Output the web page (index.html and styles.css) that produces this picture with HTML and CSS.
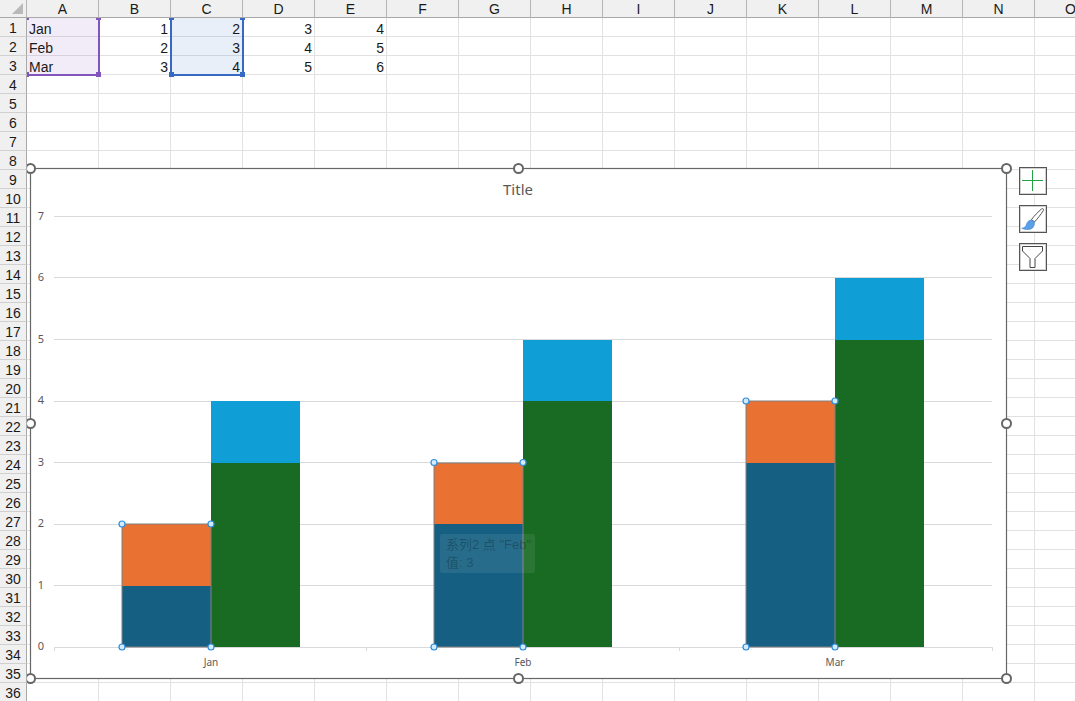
FILE: index.html
```html
<!DOCTYPE html>
<html lang="en">

<head>
    <meta charset="UTF-8">
    <title>Sheet1</title>
    <link rel="stylesheet" href="styles.css">
</head>

<body>

    <div class="sheet">
        <div class="col-heads">
            <div class="corner"><span class="corner-mark"></span></div>
            <div class="col-head">A</div>
            <div class="col-head">B</div>
            <div class="col-head">C</div>
            <div class="col-head">D</div>
            <div class="col-head">E</div>
            <div class="col-head">F</div>
            <div class="col-head">G</div>
            <div class="col-head">H</div>
            <div class="col-head">I</div>
            <div class="col-head">J</div>
            <div class="col-head">K</div>
            <div class="col-head">L</div>
            <div class="col-head">M</div>
            <div class="col-head">N</div>
            <div class="col-head">O</div>
        </div>

        <div class="sheet-body">
            <div class="row-heads">
                <div class="row-head">1</div>
                <div class="row-head">2</div>
                <div class="row-head">3</div>
                <div class="row-head">4</div>
                <div class="row-head">5</div>
                <div class="row-head">6</div>
                <div class="row-head">7</div>
                <div class="row-head">8</div>
                <div class="row-head">9</div>
                <div class="row-head">10</div>
                <div class="row-head">11</div>
                <div class="row-head">12</div>
                <div class="row-head">13</div>
                <div class="row-head">14</div>
                <div class="row-head">15</div>
                <div class="row-head">16</div>
                <div class="row-head">17</div>
                <div class="row-head">18</div>
                <div class="row-head">19</div>
                <div class="row-head">20</div>
                <div class="row-head">21</div>
                <div class="row-head">22</div>
                <div class="row-head">23</div>
                <div class="row-head">24</div>
                <div class="row-head">25</div>
                <div class="row-head">26</div>
                <div class="row-head">27</div>
                <div class="row-head">28</div>
                <div class="row-head">29</div>
                <div class="row-head">30</div>
                <div class="row-head">31</div>
                <div class="row-head">32</div>
                <div class="row-head">33</div>
                <div class="row-head">34</div>
                <div class="row-head">35</div>
                <div class="row-head">36</div>
            </div>

            <div class="cells">
                <div class="cell text sel-purple">Jan</div>
                <div class="cell">1</div>
                <div class="cell sel-blue">2</div>
                <div class="cell">3</div>
                <div class="cell">4</div>

                <div class="cell text sel-purple">Feb</div>
                <div class="cell">2</div>
                <div class="cell sel-blue">3</div>
                <div class="cell">4</div>
                <div class="cell">5</div>

                <div class="cell text sel-purple">Mar</div>
                <div class="cell">3</div>
                <div class="cell sel-blue">4</div>
                <div class="cell">5</div>
                <div class="cell">6</div>

                <div class="range range-a">
                    <span class="grip tl"></span><span class="grip tr"></span>
                    <span class="grip bl"></span><span class="grip br"></span>
                </div>
                <div class="range range-c">
                    <span class="grip tl"></span><span class="grip tr"></span>
                    <span class="grip bl"></span><span class="grip br"></span>
                </div>
            </div>
        </div>
    </div>

    <svg class="chart" width="1075" height="701" viewBox="0 0 1075 701">
        <rect class="chart-area" x="30.500" y="168.500" width="976" height="510" />

        <text class="chart-title" x="518" y="194.500">Title</text>

        <g class="grid-lines">
            <path d="M54 216.500H992" />
            <path d="M54 277.500H992" />
            <path d="M54 339.500H992" />
            <path d="M54 401.500H992" />
            <path d="M54 462.500H992" />
            <path d="M54 524.500H992" />
            <path d="M54 585.500H992" />
            <path d="M54.500 651V647.500H992.500V651" />
            <path d="M366.500 647V651M679.500 647V651" />
        </g>

        <g class="y-labels">
            <text x="41" y="220">7</text>
            <text x="41" y="281">6</text>
            <text x="41" y="343">5</text>
            <text x="41" y="404">4</text>
            <text x="41" y="466">3</text>
            <text x="41" y="527">2</text>
            <text x="41" y="589">1</text>
            <text x="41" y="650">0</text>
        </g>

        <g class="x-labels">
            <text x="211" y="666">Jan</text>
            <text x="523" y="666">Feb</text>
            <text x="835" y="666">Mar</text>
        </g>

        <g class="s-green">
            <rect x="211" y="463" width="89" height="184" />
            <rect x="523" y="401" width="89" height="246" />
            <rect x="835" y="340" width="89" height="307" />
        </g>
        <g class="s-cyan">
            <rect x="211" y="401" width="89" height="62" />
            <rect x="523" y="340" width="89" height="61" />
            <rect x="835" y="278" width="89" height="62" />
        </g>
        <g class="s-blue">
            <rect x="122" y="586" width="89" height="61" />
            <rect x="434" y="524" width="89" height="123" />
            <rect x="746" y="463" width="89" height="184" />
        </g>
        <g class="s-orange">
            <rect x="122" y="524" width="89" height="62" />
            <rect x="434" y="463" width="89" height="61" />
            <rect x="746" y="401" width="89" height="62" />
        </g>

        <g class="picked">
            <rect x="122" y="524" width="89" height="123" />
            <rect x="434" y="463" width="89" height="184" />
            <rect x="746" y="401" width="89" height="246" />
        </g>

        <g class="points">
            <circle cx="122" cy="524" r="3" /><circle cx="211" cy="524" r="3" />
            <circle cx="122" cy="647" r="3" /><circle cx="211" cy="647" r="3" />
            <circle cx="434" cy="462.500" r="3" /><circle cx="523" cy="462.500" r="3" />
            <circle cx="434" cy="647" r="3" /><circle cx="523" cy="647" r="3" />
            <circle cx="746" cy="401" r="3" /><circle cx="835" cy="401" r="3" />
            <circle cx="746" cy="647" r="3" /><circle cx="835" cy="647" r="3" />
        </g>

        <g class="frame-handles">
            <circle cx="30.500" cy="168.500" r="4.500" /><circle cx="518.500" cy="168.500" r="4.500" />
            <circle cx="1006.500" cy="168.500" r="4.500" /><circle cx="30.500" cy="423.500" r="4.500" />
            <circle cx="1006.500" cy="423.500" r="4.500" /><circle cx="30.500" cy="678.500" r="4.500" />
            <circle cx="518.500" cy="678.500" r="4.500" /><circle cx="1006.500" cy="678.500" r="4.500" />
        </g>
    </svg>

    <div class="chart-tip">系列2 点 "Feb"<br>值: 3</div>

    <div class="chart-tools">
        <div class="tool">
            <svg width="24" height="24" viewBox="0 0 24 24">
                <path class="icon-plus" d="M11.500 1V22M1 11.500H22" />
            </svg>
        </div>
        <div class="tool">
            <svg width="24" height="24" viewBox="0 0 24 24">
                <path class="icon-handle" d="M10.500 12.500C13 9 17.500 4.500 20.500 2C22 1.200 23 2 22.300 3.500C20 7.500 16.500 11.500 13.500 15Z" />
                <path class="icon-bristle" d="M0.700 21.300C3.500 21 5 19.500 5.500 17C6.500 14.500 8.500 12.800 10.500 13L13.500 15.200C13.800 18 12.500 21 10 22C7 23 3.500 22.500 0.700 21.300Z" />
            </svg>
        </div>
        <div class="tool">
            <svg width="24" height="24" viewBox="0 0 24 24">
                <path class="icon-funnel" d="M1.500 1.500H21.500V6L14 13.500V22.500H9V13.500L1.500 6Z" />
            </svg>
        </div>
    </div>

</body>

</html>
```

FILE: styles.css
```css
* {
    margin: 0;
    padding: 0;
    box-sizing: border-box;
}

html,
body {
    width: 1075px;
    height: 701px;
    overflow: hidden;
}

body {
    position: relative;
    background-color: white;
    font-family: 'Liberation Sans', Arial, sans-serif;
    color: #1a1a1a;
}

.sheet {
    width: 1075px;
    height: 701px;
    overflow: hidden;
}

.col-heads {
    position: relative;
    z-index: 1;
    display: flex;
    height: 18px;
}

.corner {
    flex: 0 0 27px;
    position: relative;
    background-color: #f0f0f0;
    border-right: 1px solid #b5b5b5;
    border-bottom: 1px solid #a8a8a8;
}

.corner-mark {
    position: absolute;
    right: 3px;
    bottom: 3px;
    border-style: solid;
    border-width: 0 0 11px 11px;
    border-color: transparent transparent #b9b9b9 transparent;
}

.col-head {
    flex: 0 0 72px;
    display: flex;
    justify-content: center;
    align-items: center;
    background-color: #f0f0f0;
    border-right: 1px solid #b5b5b5;
    border-bottom: 1px solid #a8a8a8;
    font-size: 14px;
}

.sheet-body {
    display: flex;
}

.row-heads {
    position: relative;
    z-index: 1;
    flex: 0 0 27px;
}

.row-head {
    display: flex;
    justify-content: center;
    align-items: center;
    height: 19px;
    padding-top: 2px;
    background-color: #f0f0f0;
    border-right: 1px solid #a8a8a8;
    border-bottom: 1px solid #d0d0d0;
    font-size: 14px;
}

.cells {
    position: relative;
    flex: 1;
    height: 684px;
    display: grid;
    grid-template-columns: repeat(5, 72px);
    grid-auto-rows: 19px;
    align-content: start;
    background-image:
        linear-gradient(to left, #e1e1e1 1px, transparent 1px),
        linear-gradient(to top, #e1e1e1 1px, transparent 1px);
    background-size: 72px 19px;
}

.cell {
    padding: 1px 2px 0 2px;
    font-size: 14px;
    line-height: 20px;
    text-align: right;
    border-right: 1px solid transparent;
}

.cell.text {
    text-align: left;
}

.sel-purple {
    background-color: rgba(129, 86, 188, 0.11);
}

.sel-blue {
    background-color: rgba(53, 105, 196, 0.11);
}

.range {
    position: absolute;
    top: 0;
    height: 58px;
    border-style: solid;
    border-width: 0 2px 2px 2px;
}

.range-a {
    left: 0;
    width: 73px;
    border-color: #8156bc;
    border-left-width: 0;
    color: #8156bc;
}

.range-c {
    left: 143px;
    width: 74px;
    border-color: #3569c4;
    color: #3569c4;
}

.grip {
    position: absolute;
    background-color: currentColor;
    width: 5px;
    height: 5px;
}

.grip.tl {
    top: -3px;
    left: -3px;
}

.grip.tr {
    top: -3px;
    right: -3px;
}

.grip.bl {
    bottom: -3px;
    left: -3px;
}

.grip.br {
    bottom: -3px;
    right: -3px;
}

.chart {
    position: absolute;
    left: 0;
    top: 0;
}

.chart-area {
    fill: white;
    stroke: #666666;
    stroke-width: 1.2;
}

.chart-title {
    fill: #595959;
    font-family: 'Noto Sans', sans-serif;
    font-size: 15px;
    text-anchor: middle;
}

.grid-lines path {
    fill: none;
    stroke: #d9d9d9;
    stroke-width: 1;
}

.y-labels text,
.x-labels text {
    fill: #595959;
    font-family: 'Noto Sans', sans-serif;
    text-anchor: middle;
}

.y-labels text {
    font-size: 11px;
}

.x-labels text {
    font-size: 10px;
}

.s-green {
    fill: #196b24;
}

.s-cyan {
    fill: #0f9ed5;
}

.s-blue {
    fill: #156082;
}

.s-orange {
    fill: #e97132;
}

.picked rect {
    fill: none;
    stroke: #808080;
    stroke-width: 1;
}

.points circle {
    fill: #d5ebfb;
    stroke: #2e8fe0;
    stroke-width: 1.2;
}

.frame-handles circle {
    fill: white;
    stroke: #666666;
    stroke-width: 2;
}

.chart-tip {
    position: absolute;
    left: 440px;
    top: 534px;
    width: 95px;
    height: 39px;
    padding: 2px 6px;
    overflow: hidden;
    white-space: nowrap;
    border-radius: 2px;
    background-color: rgba(255, 255, 255, 0.08);
    color: rgba(0, 0, 0, 0.26);
    font-family: 'Liberation Sans', 'Noto Sans CJK SC', sans-serif;
    font-size: 13px;
    line-height: 18px;
}

.chart-tools {
    position: absolute;
    left: 1019px;
    top: 167px;
    display: flex;
    flex-direction: column;
    gap: 10px;
}

.tool {
    display: flex;
    justify-content: center;
    align-items: center;
    width: 28px;
    height: 28px;
    background-color: white;
    border: 1px solid #555555;
    box-shadow: inset 0 0 0 1px rgba(102, 102, 102, 0.3);
}

.icon-plus {
    fill: none;
    stroke: #21a246;
    stroke-width: 1;
}

.icon-handle {
    fill: white;
    stroke: #555555;
    stroke-width: 1;
}

.icon-bristle {
    fill: #5b9fe6;
    stroke: #2a7fd0;
    stroke-width: 0.5;
}

.icon-funnel {
    fill: none;
    stroke: #444444;
    stroke-width: 1;
}
```
